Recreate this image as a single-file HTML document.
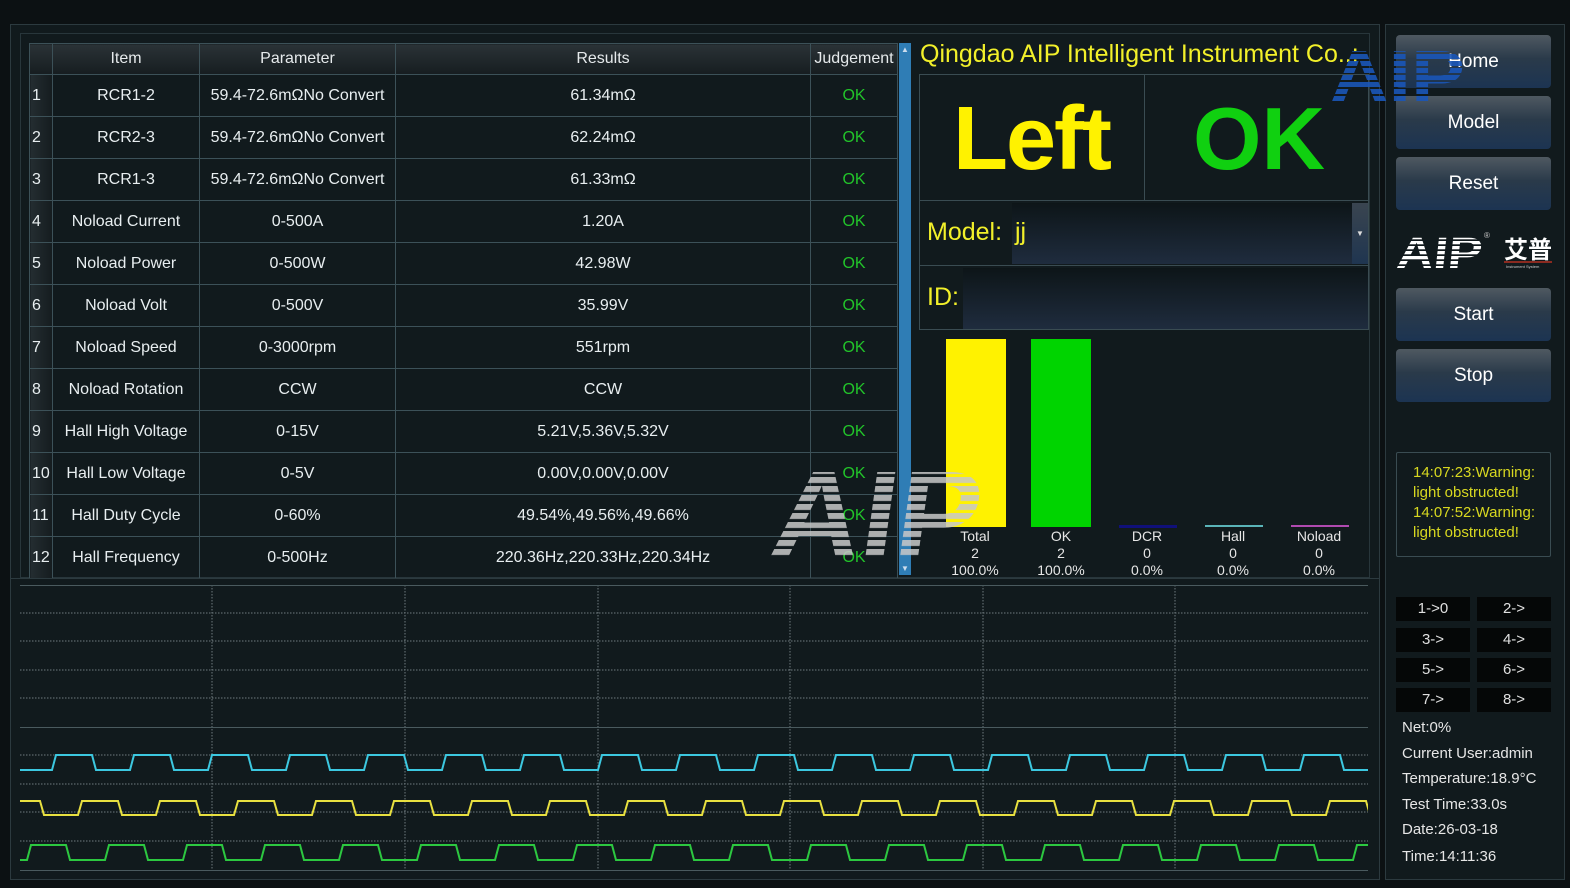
<!DOCTYPE html>
<html><head><meta charset="utf-8"><style>
*{margin:0;padding:0;box-sizing:border-box}
body{width:1570px;height:888px;background:#0c1113;position:relative;overflow:hidden;font-family:"Liberation Sans","DejaVu Sans",sans-serif;color:#e8eef0}
.abs{position:absolute}
.frame{position:absolute;left:10px;top:24px;width:1370px;height:856px;border:1px solid #2c3a3f;background:#111a1d}
.rframe{position:absolute;left:1385px;top:24px;width:180px;height:856px;border:1px solid #2c3a3f;background:#111a1d}
table{position:absolute;left:29px;top:43px;border-collapse:collapse;font-size:16px}
td,th{border:1px solid #3c5158;text-align:center;font-weight:normal;height:42px;white-space:nowrap}
th{height:31px;background:linear-gradient(#2a3236,#161d20);color:#e6eaec}
td.n{text-align:left;padding-left:2px;background:linear-gradient(90deg,#242d31,#151c1f);width:23px}
td.ok{color:#22c42a}
.btn{position:absolute;left:1396px;width:155px;height:53px;border-radius:4px;background:linear-gradient(#4f5961 0%,#2a3a4a 45%,#1c3452 100%);color:#fff;font-size:19px;text-align:center;line-height:53px}
.sb{position:absolute;width:74px;height:24px;background:#050707;color:#e0e0e0;font-size:15px;text-align:center;line-height:24px}
.info{position:absolute;left:1402px;font-size:15px;color:#e6e6e6}
</style></head><body>
<div class="frame"></div>
<div class="rframe"></div>
<div class="abs" style="left:20px;top:33px;width:1350px;height:545px;border:1px solid #28363b"></div>
<table>
<tr><th style="width:23px"></th><th style="width:147px">Item</th><th style="width:196px">Parameter</th><th style="width:415px">Results</th><th style="width:87px">Judgement</th></tr>
<tr><td class="n">1</td><td>RCR1-2</td><td>59.4-72.6mΩNo Convert</td><td>61.34mΩ</td><td class="ok">OK</td></tr>
<tr><td class="n">2</td><td>RCR2-3</td><td>59.4-72.6mΩNo Convert</td><td>62.24mΩ</td><td class="ok">OK</td></tr>
<tr><td class="n">3</td><td>RCR1-3</td><td>59.4-72.6mΩNo Convert</td><td>61.33mΩ</td><td class="ok">OK</td></tr>
<tr><td class="n">4</td><td>Noload Current</td><td>0-500A</td><td>1.20A</td><td class="ok">OK</td></tr>
<tr><td class="n">5</td><td>Noload Power</td><td>0-500W</td><td>42.98W</td><td class="ok">OK</td></tr>
<tr><td class="n">6</td><td>Noload Volt</td><td>0-500V</td><td>35.99V</td><td class="ok">OK</td></tr>
<tr><td class="n">7</td><td>Noload Speed</td><td>0-3000rpm</td><td>551rpm</td><td class="ok">OK</td></tr>
<tr><td class="n" style="height:41px">8</td><td>Noload Rotation</td><td>CCW</td><td>CCW</td><td class="ok">OK</td></tr>
<tr><td class="n" style="height:41px">9</td><td>Hall High Voltage</td><td>0-15V</td><td>5.21V,5.36V,5.32V</td><td class="ok">OK</td></tr>
<tr><td class="n" style="height:41px">10</td><td>Hall Low Voltage</td><td>0-5V</td><td>0.00V,0.00V,0.00V</td><td class="ok">OK</td></tr>
<tr><td class="n" style="height:41px">11</td><td>Hall Duty Cycle</td><td>0-60%</td><td>49.54%,49.56%,49.66%</td><td class="ok">OK</td></tr>
<tr><td class="n" style="height:41px">12</td><td>Hall Frequency</td><td>0-500Hz</td><td>220.36Hz,220.33Hz,220.34Hz</td><td class="ok">OK</td></tr>
</table>
<div class="abs" style="left:899px;top:43px;width:12px;height:532px;background:#2f7db5"></div>
<div class="abs" style="left:901px;top:45px;font-size:8px;color:#cde">▲</div>
<div class="abs" style="left:901px;top:564px;font-size:8px;color:#cde">▼</div>

<div class="abs" style="left:920px;top:40px;font-size:25px;color:#f2f02a;white-space:nowrap">Qingdao AIP Intelligent Instrument Co..:</div>
<div class="abs" style="left:919px;top:74px;width:450px;height:256px;border:1px solid #3a4c52"></div>
<div class="abs" style="left:1144px;top:74px;width:1px;height:126px;background:#3a4c52"></div>
<div class="abs" style="left:919px;top:200px;width:450px;height:1px;background:#3a4c52"></div>
<div class="abs" style="left:919px;top:265px;width:450px;height:1px;background:#3a4c52"></div>
<div class="abs" style="left:953px;top:88px;font-size:90px;font-weight:bold;color:#fff200;letter-spacing:-2px">Left</div>
<div class="abs" style="left:1193px;top:88px;font-size:88px;font-weight:bold;color:#10d010">OK</div>
<div class="abs" style="left:927px;top:218px;font-size:25px;color:#f2f02a">Model:</div>
<div class="abs" style="left:1012px;top:203px;width:340px;height:61px;background:linear-gradient(#0d1518,#1f2c3e)"></div>
<div class="abs" style="left:1352px;top:203px;width:16px;height:61px;background:linear-gradient(#3a4550,#1f3550);color:#ddd;font-size:8px;text-align:center;line-height:61px">▼</div>
<div class="abs" style="left:1015px;top:218px;font-size:25px;color:#f2f02a">jj</div>
<div class="abs" style="left:927px;top:283px;font-size:25px;color:#f2f02a">ID:</div>
<div class="abs" style="left:963px;top:268px;width:405px;height:61px;background:linear-gradient(#0d1518,#1f2c3e)"></div>

<div class="abs" style="left:946px;top:339px;width:60px;height:188px;background:#fff200"></div>
<div class="abs" style="left:1031px;top:339px;width:60px;height:188px;background:#00d400"></div>
<div class="abs" style="left:1119px;top:525px;width:58px;height:3px;background:#10107a"></div>
<div class="abs" style="left:1205px;top:525px;width:58px;height:2px;background:#5ab4b8"></div>
<div class="abs" style="left:1291px;top:525px;width:58px;height:2px;background:#b04ab0"></div>
<div class="abs" style="left:925px;top:528px;width:440px;font-size:14px;line-height:17px;color:#e6e6e6">
<div class="abs" style="left:0;width:100px;text-align:center">Total<br>2<br>100.0%</div>
<div class="abs" style="left:86px;width:100px;text-align:center">OK<br>2<br>100.0%</div>
<div class="abs" style="left:172px;width:100px;text-align:center">DCR<br>0<br>0.0%</div>
<div class="abs" style="left:258px;width:100px;text-align:center">Hall<br>0<br>0.0%</div>
<div class="abs" style="left:344px;width:100px;text-align:center">Noload<br>0<br>0.0%</div>
</div>

<svg class="abs" style="left:0;top:0" width="1570" height="888">
<defs>
<pattern id="st" width="4" height="9" patternUnits="userSpaceOnUse"><rect width="4" height="6" fill="#c8c8c8"/></pattern>
<pattern id="cy" x="20" y="753" width="78" height="20" patternUnits="userSpaceOnUse"><path d="M0,17 L32,17 L36,2 L72,2 L76,17 L78,17" fill="none" stroke="#3cc8e0" stroke-width="2"/></pattern>
<pattern id="ye" x="20" y="799" width="78" height="20" patternUnits="userSpaceOnUse"><path d="M0,2 L20,2 L24,16 L58,16 L62,2 L78,2" fill="none" stroke="#e8e040" stroke-width="2"/></pattern>
<pattern id="gr" x="20" y="843" width="78" height="20" patternUnits="userSpaceOnUse"><path d="M0,17 L7,17 L11,2 L46,2 L50,17 L78,17" fill="none" stroke="#2cc840" stroke-width="2"/></pattern>
</defs>
<rect x="10" y="578" width="1370" height="1" fill="#2c3a3f"/>
<g stroke="#6e7a7e" stroke-dasharray="1.5 1.5" stroke-width="1">
<line x1="20" y1="613" x2="1368" y2="613"/><line x1="20" y1="641" x2="1368" y2="641"/><line x1="20" y1="670" x2="1368" y2="670"/><line x1="20" y1="698" x2="1368" y2="698"/>
<line x1="20" y1="755" x2="1368" y2="755"/><line x1="20" y1="784" x2="1368" y2="784"/><line x1="20" y1="812" x2="1368" y2="812"/><line x1="20" y1="841" x2="1368" y2="841"/>
<line x1="212" y1="585" x2="212" y2="870"/><line x1="405" y1="585" x2="405" y2="870"/><line x1="598" y1="585" x2="598" y2="870"/><line x1="790" y1="585" x2="790" y2="870"/><line x1="983" y1="585" x2="983" y2="870"/><line x1="1175" y1="585" x2="1175" y2="870"/>
</g>
<g fill="#4a5a5e"><rect x="20" y="585" width="1348" height="1"/><rect x="20" y="727" width="1348" height="1"/><rect x="20" y="870" width="1348" height="1"/></g>
<rect x="20" y="753" width="1348" height="20" fill="url(#cy)"/>
<rect x="20" y="799" width="1348" height="20" fill="url(#ye)"/>
<rect x="20" y="843" width="1348" height="20" fill="url(#gr)"/>
<text x="770" y="558" font-family="Liberation Sans" font-weight="bold" font-size="125" fill="url(#st)" opacity="0.85" transform="skewX(-8) translate(75,0)">AIP</text>
</svg>

<div class="btn" style="top:35px">Home</div>
<div class="btn" style="top:96px">Model</div>
<div class="btn" style="top:157px">Reset</div>
<div class="btn" style="top:288px">Start</div>
<div class="btn" style="top:349px">Stop</div>
<svg class="abs" style="left:1320px;top:40px" width="160" height="70">
<defs><pattern id="stb" width="4" height="7" patternUnits="userSpaceOnUse"><rect width="4" height="5" fill="#1a56b8"/></pattern></defs>
<text x="10" y="61" font-family="Liberation Sans" font-weight="bold" font-size="72" fill="url(#stb)" opacity="0.9" textLength="135" lengthAdjust="spacingAndGlyphs">AIP</text>
</svg>
<svg class="abs" style="left:1396px;top:226px" width="160" height="50">
<defs><pattern id="st2" width="4" height="5" patternUnits="userSpaceOnUse"><rect width="4" height="3.3" fill="#fff"/></pattern></defs>
<text x="0" y="42" font-family="Liberation Sans" font-weight="bold" font-size="44" fill="url(#st2)" transform="skewX(-6) translate(4,0)" textLength="85" lengthAdjust="spacingAndGlyphs">AIP</text>
<text x="88" y="12" font-size="8" fill="#ccc" font-family="Liberation Sans">®</text>
<text x="108" y="32" font-size="24" font-weight="bold" fill="#fff" font-family="Liberation Sans,Noto Sans CJK SC,sans-serif">艾普</text>
<rect x="108" y="35" width="48" height="2" fill="#8a2a20"/>
<text x="110" y="42" font-size="4" fill="#ccc" font-family="Liberation Sans">Instrument System</text>
</svg>
<div class="abs" style="left:1396px;top:452px;width:155px;height:105px;border:1px solid #3a4c52;border-radius:2px;padding:10px 0 0 16px;font-size:15px;line-height:20px;color:#d8d820">14:07:23:Warning:<br>light obstructed!<br>14:07:52:Warning:<br>light obstructed!</div>
<div class="sb" style="left:1396px;top:597px">1-&gt;0</div><div class="sb" style="left:1477px;top:597px">2-&gt;</div>
<div class="sb" style="left:1396px;top:628px">3-&gt;</div><div class="sb" style="left:1477px;top:628px">4-&gt;</div>
<div class="sb" style="left:1396px;top:658px">5-&gt;</div><div class="sb" style="left:1477px;top:658px">6-&gt;</div>
<div class="sb" style="left:1396px;top:688px">7-&gt;</div><div class="sb" style="left:1477px;top:688px">8-&gt;</div>
<div class="info" style="top:719px">Net:0%</div>
<div class="info" style="top:745px">Current User:admin</div>
<div class="info" style="top:770px">Temperature:18.9°C</div>
<div class="info" style="top:796px">Test Time:33.0s</div>
<div class="info" style="top:821px">Date:26-03-18</div>
<div class="info" style="top:848px">Time:14:11:36</div>
</body></html>
